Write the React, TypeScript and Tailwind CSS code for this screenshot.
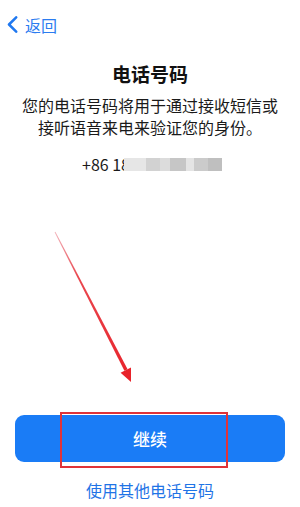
import React from "react";

export default function App() {
  const font = { fontFamily: '"Noto Sans CJK SC", "Noto Sans", sans-serif' };
  return (
    <div
      className="relative w-[300px] h-[507px] bg-white overflow-hidden flex flex-col"
      style={font}
    >
      {/* nav */}
      <div className="h-[46px] flex items-center pl-[7px] pt-[3px]">
        <svg width="11" height="17" viewBox="0 0 11 17" className="shrink-0">
          <path
            d="M9.2 1.3 L2 8.5 L9.2 15.7"
            fill="none"
            stroke="#1f78f0"
            strokeWidth="2.5"
            strokeLinecap="round"
            strokeLinejoin="round"
          />
        </svg>
        <span className="ml-[7px] text-[16px] leading-[20px] text-[#2b7cf0]">返回</span>
      </div>

      {/* title */}
      <div className="mt-[15px] text-center text-[19px] leading-[26px] font-semibold text-[#111]">
        电话号码
      </div>

      {/* description */}
      <div className="mt-[7px] text-center text-[16px] leading-[22px] text-[#1a1a1a]">
        您的电话号码将用于通过接收短信或
        <br />
        接听语音来电来验证您的身份。
      </div>

      {/* phone */}
      <div className="mt-[15px] pl-[82px] flex items-center h-[22px]">
        <span className="text-[16px] leading-[22px] text-[#1a1a1a]">+86 18</span>
        <div className="-ml-[6px] flex items-center h-[13px] blur-[0.6px]">
          <div className="w-[22px] h-[13px] bg-[#e6e6e6]" />
          <div className="w-[14px] h-[13px] bg-[#d2d2d2]" />
          <div className="w-[10px] h-[13px] bg-[#dcdcdc]" />
          <div className="w-[16px] h-[13px] bg-[#c6c6c6]" />
          <div className="w-[8px] h-[13px] bg-[#e4e4e4]" />
          <div className="w-[14px] h-[13px] bg-[#cbcbcb]" />
          <div className="w-[14px] h-[13px] bg-[#bfbfbf]" />
        </div>
      </div>

      <div className="flex-1" />

      {/* button */}
      <div className="mx-[15px] h-[47px] rounded-[9px] bg-[#1a7cf6] flex items-center justify-center">
        <span className="text-white text-[17px] leading-[22px] font-medium">继续</span>
      </div>

      {/* link */}
      <div className="mt-[17px] mb-[6px] text-center text-[16px] leading-[22px] text-[#1f74e6]">
        使用其他电话号码
      </div>

      {/* annotation overlay: arrow */}
      <svg
        className="absolute left-0 top-0 pointer-events-none"
        width="300"
        height="507"
        viewBox="0 0 300 507"
      >
        <defs>
          <linearGradient id="arrowGrad" x1="55" y1="232" x2="131" y2="381" gradientUnits="userSpaceOnUse">
            <stop offset="0" stopColor="#f2b3bb" />
            <stop offset="0.3" stopColor="#e9484f" />
            <stop offset="1" stopColor="#e8222a" />
          </linearGradient>
        </defs>
        <polygon
          points="55.4,231.8 54.6,232.2 124.4,370.8 127.6,369.2"
          fill="url(#arrowGrad)"
        />
        <polygon points="131,382 131,367.5 120.6,372.8" fill="#e8222a" />
      </svg>

      {/* annotation overlay: highlight box */}
      <div className="absolute left-[60px] top-[412px] w-[168px] h-[56px] border-2 border-[#e03339] pointer-events-none" />
    </div>
  );
}
